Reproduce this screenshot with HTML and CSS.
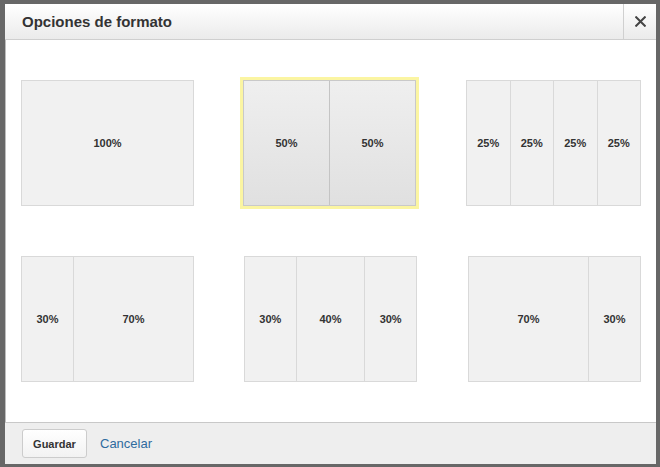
FILE: index.html
```html
<!DOCTYPE html>
<html lang="es">
<head>
<meta charset="utf-8">
<title>Opciones de formato</title>
<link rel="stylesheet" href="styles.css">
</head>
<body>
<div class="dialog">
  <div class="header">
    <h1 class="title">Opciones de formato</h1>
    <button class="close" type="button" aria-label="Cerrar">
      <svg width="11" height="11" viewBox="0 0 11 11"><path d="M1.2 1.2 L9.8 9.8 M9.8 1.2 L1.2 9.8" stroke="#444" stroke-width="2" stroke-linecap="square"/></svg>
    </button>
  </div>
  <div class="content">
    <div class="layouts">
      <div class="tile"><div class="col">100%</div></div>
      <div class="tile selected"><div class="col">50%</div><div class="col">50%</div></div>
      <div class="tile"><div class="col">25%</div><div class="col">25%</div><div class="col">25%</div><div class="col">25%</div></div>
      <div class="tile"><div class="col w30">30%</div><div class="col w70">70%</div></div>
      <div class="tile"><div class="col w30">30%</div><div class="col w40">40%</div><div class="col w30">30%</div></div>
      <div class="tile shift"><div class="col w70">70%</div><div class="col w30">30%</div></div>
    </div>
  </div>
  <div class="footer">
    <button class="btn" type="button">Guardar</button>
    <a class="cancel" href="#">Cancelar</a>
  </div>
</div>
</body>
</html>
```

FILE: styles.css
```css
html, body {
  margin: 0;
  padding: 0;
}
body {
  background: #676767;
  padding: 4px 4px 3px 5px;
  font-family: "Liberation Sans", Arial, sans-serif;
  color: #333;
}
.dialog {
  width: 651px;
  height: 460px;
  background: #fff;
  display: flex;
  flex-direction: column;
  box-shadow: inset 1px 0 0 #bdbdbd;
}
.header {
  height: 35px;
  border-bottom: 1px solid #cfcfcf;
  background: linear-gradient(#ffffff, #ebebeb);
  display: flex;
  align-items: stretch;
}
.title {
  flex: 1;
  margin: 0;
  padding-left: 17px;
  font-size: 15px;
  font-weight: bold;
  line-height: 36px;
  color: #333;
}
.close {
  width: 33px;
  border: 0;
  border-left: 1px solid #d0d0d0;
  background: transparent;
  padding: 0;
  display: flex;
  align-items: center;
  justify-content: center;
}
.close svg { display: block; }
.content {
  flex: 1;
  padding: 40px 0 0 16px;
}
.layouts {
  display: grid;
  grid-template-columns: 173px 173px 175px;
  grid-template-rows: 126px 126px;
  column-gap: 50px;
  row-gap: 50px;
}
.layouts > .tile:nth-child(3) { margin-left: -1px; margin-right: 1px; }
.tile {
  display: flex;
  border: 1px solid #d9d9d9;
  background: #f1f1f1;
  box-sizing: border-box;
}
.tile.shift { margin-left: 1px; margin-right: 1px; }
.col {
  flex: 1 1 0;
  display: flex;
  align-items: center;
  justify-content: center;
  font-size: 11px;
  font-weight: bold;
  color: #333;
}
.col + .col { border-left: 1px solid #d9d9d9; }
.col.w30 { flex: 30 1 0; }
.col.w40 { flex: 40 1 0; }
.col.w70 { flex: 70 1 0; }
.tile.selected {
  background: linear-gradient(#efefef, #e0e0e0);
  border-color: #c9c9c9;
  outline: 3px solid #fbf5a2;
  margin-left: -1px;
  margin-right: 1px;
}
.tile.selected .col + .col { border-left-color: #c4c4c4; }
.footer {
  height: 42px;
  border-top: 1px solid #c8c8c8;
  background: #eeeeee;
  display: flex;
  align-items: flex-start;
  padding-left: 17px;
  padding-top: 6px;
  box-sizing: border-box;
  gap: 13px;
}
.btn {
  height: 29px;
  width: 65px;
  border: 1px solid #cccccc;
  border-radius: 3px;
  background: linear-gradient(#ffffff, #f2f2f2);
  font-family: "Liberation Sans", Arial, sans-serif;
  font-size: 11px;
  font-weight: bold;
  color: #333;
  padding: 0;
}
.cancel {
  font-size: 13px;
  line-height: 29px;
  color: #2f6b9e;
  text-decoration: none;
}
```
